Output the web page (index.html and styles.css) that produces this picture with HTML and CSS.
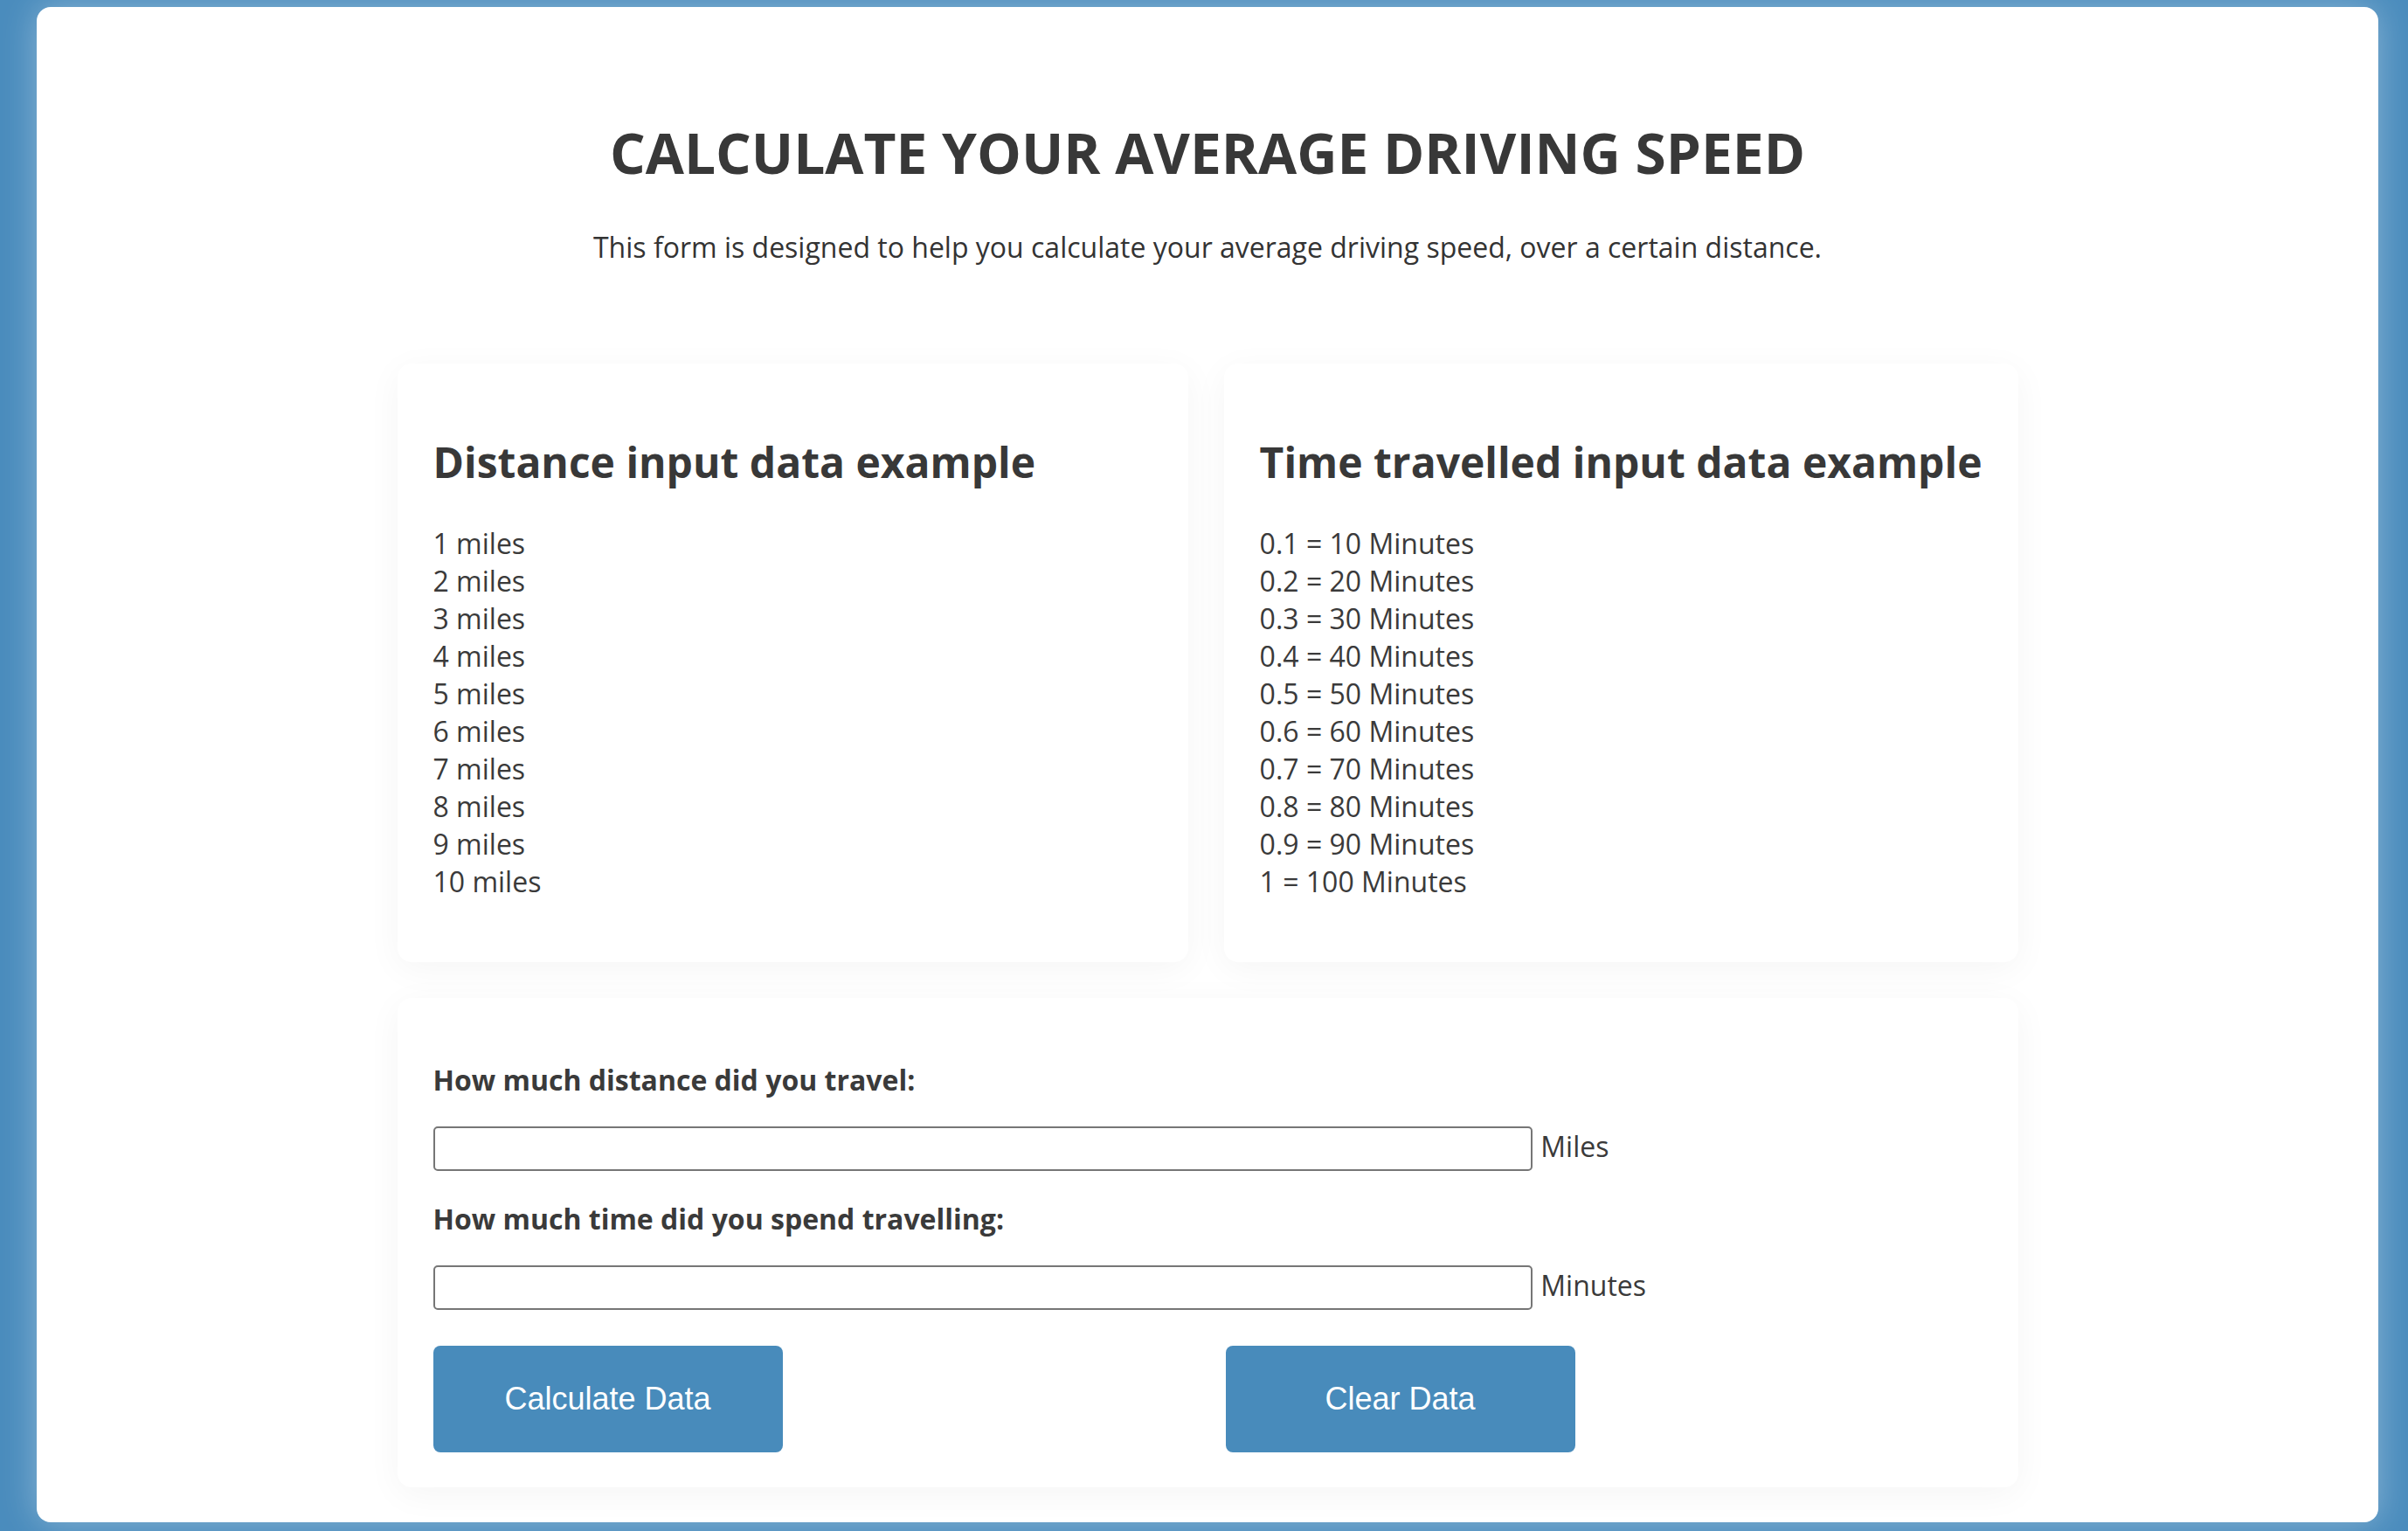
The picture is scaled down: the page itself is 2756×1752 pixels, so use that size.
FILE: index.html
```html
<!DOCTYPE html>
<html lang="en">
<head>
<meta charset="utf-8">
<title>Calculate your average driving speed</title>
<link rel="stylesheet" href="styles.css">
</head>
<body>
<main class="panel">
  <h1 class="title">Calculate your average driving speed</h1>
  <p class="intro">This form is designed to help you calculate your average driving speed, over a certain distance.</p>
  <div class="container">
    <div class="examples">
      <section class="card">
        <h2 class="card-title">Distance input data example</h2>
        <ul class="list">
          <li>1 miles</li>
          <li>2 miles</li>
          <li>3 miles</li>
          <li>4 miles</li>
          <li>5 miles</li>
          <li>6 miles</li>
          <li>7 miles</li>
          <li>8 miles</li>
          <li>9 miles</li>
          <li>10 miles</li>
        </ul>
      </section>
      <section class="card">
        <h2 class="card-title">Time travelled input data example</h2>
        <ul class="list">
          <li>0.1 = 10 Minutes</li>
          <li>0.2 = 20 Minutes</li>
          <li>0.3 = 30 Minutes</li>
          <li>0.4 = 40 Minutes</li>
          <li>0.5 = 50 Minutes</li>
          <li>0.6 = 60 Minutes</li>
          <li>0.7 = 70 Minutes</li>
          <li>0.8 = 80 Minutes</li>
          <li>0.9 = 90 Minutes</li>
          <li>1 = 100 Minutes</li>
        </ul>
      </section>
    </div>
    <form class="card form-card" onsubmit="return false;">
      <label class="field-label" for="distance">How much distance did you travel:</label>
      <div class="field-row">
        <input class="field-input" type="text" id="distance">
        <span class="unit">Miles</span>
      </div>
      <label class="field-label" for="time">How much time did you spend travelling:</label>
      <div class="field-row">
        <input class="field-input" type="text" id="time">
        <span class="unit">Minutes</span>
      </div>
      <div class="actions">
        <button class="btn" type="button">Calculate Data</button>
        <button class="btn" type="reset">Clear Data</button>
      </div>
    </form>
  </div>
</main>
</body>
</html>
```

FILE: styles.css
```css
* { box-sizing: border-box; }

html, body { margin: 0; }

body {
  height: 1752px;
  padding: 8px 34px 10px 42px;
  background: #4a8cbd;
  font-family: "Open Sans", "Liberation Sans", sans-serif;
  color: #3a3a3a;
  overflow: hidden;
}

.panel {
  height: 100%;
  background: #ffffff;
  border-radius: 16px;
  box-shadow: 0 0 40px rgba(255, 255, 255, 0.35);
  padding-top: 129px;
}

.title {
  margin: 0;
  text-align: center;
  text-transform: uppercase;
  font-size: 64px;
  line-height: 1.2;
  font-weight: 700;
  color: #383838;
}

.intro {
  margin: 45px 0 0;
  text-align: center;
  font-size: 32px;
  line-height: 48px;
  color: #333;
}

.container {
  max-width: 1855px;
  margin: 109px auto 0;
}

.examples {
  display: grid;
  grid-template-columns: 1fr 1fr;
  gap: 41px;
}

.card {
  background: #fff;
  border-radius: 16px;
  padding: 41px;
  box-shadow: 0 8px 40px rgba(0, 0, 0, 0.045);
}

.card-title {
  margin: 43px 0 0;
  font-size: 48px;
  line-height: 1.2;
  font-weight: 700;
  color: #383838;
  white-space: nowrap;
}

.list {
  list-style: none;
  margin: 43px 0 30px;
  padding: 0;
  font-size: 32px;
  line-height: 43px;
}

.form-card {
  margin-top: 41px;
  padding-bottom: 40px;
  display: flex;
  flex-direction: column;
}

.field-label {
  display: block;
  font-size: 32px;
  line-height: 43px;
  font-weight: 700;
  margin-top: 31px;
}

.field-row {
  display: flex;
  align-items: center;
  margin-top: 32px;
}

.field-label + .field-row + .field-label {
  margin-top: 33px;
}

.field-input {
  width: 71%;
  height: 51px;
  border: 2px solid #767676;
  border-radius: 5px;
  background: #fff;
  font-size: 28px;
  padding: 0 8px;
  margin: 0;
}

.unit {
  margin-left: 9px;
  margin-bottom: 7px;
  font-size: 32px;
  line-height: 43px;
}

.actions {
  display: grid;
  grid-template-columns: 1fr 1fr;
  gap: 41px;
  margin-top: 41px;
}

.btn {
  width: 400px;
  height: 122px;
  border: 0;
  border-radius: 8px;
  background: #488bbb;
  color: #fff;
  font-family: "Liberation Sans", Arial, sans-serif;
  font-size: 36px;
  cursor: pointer;
}
```
